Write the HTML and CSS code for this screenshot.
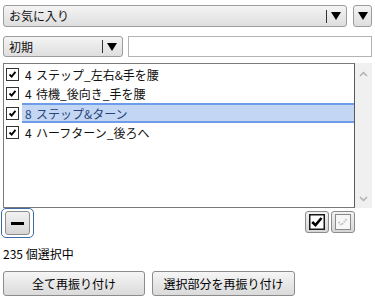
FILE: index.html
```html
<!DOCTYPE html>
<html lang="ja">
<head>
    <meta charset="UTF-8">
    <meta name="viewport" content="width=device-width, initial-scale=1.0">
    <title>お気に入り</title>
    <link rel="stylesheet" href="styles.css">
</head>
<body>
    <div class="panel">
        <div class="row row-top">
            <div class="select select-wide">
                <span class="select-label">お気に入り</span>
                <span class="select-arrow"><i class="sep"></i><i class="tri"></i></span>
            </div>
            <div class="select-btn"><i class="tri"></i></div>
        </div>

        <div class="row row-filter">
            <div class="select select-small">
                <span class="select-label">初期</span>
                <span class="select-arrow"><i class="sep"></i><i class="tri"></i></span>
            </div>
            <input class="search" type="text">
        </div>

        <div class="list-wrap">
            <ul class="list">
                <li class="item">
                    <span class="check"><svg viewBox="0 0 13 13"><path d="M3 6.5 L5.5 9 L10 3.5" /></svg></span>
                    <span class="num">4</span><span class="name">ステップ_左右&amp;手を腰</span>
                </li>
                <li class="item">
                    <span class="check"><svg viewBox="0 0 13 13"><path d="M3 6.5 L5.5 9 L10 3.5" /></svg></span>
                    <span class="num">4</span><span class="name">待機_後向き_手を腰</span>
                </li>
                <li class="item selected">
                    <span class="check"><svg viewBox="0 0 13 13"><path d="M3 6.5 L5.5 9 L10 3.5" /></svg></span>
                    <span class="hl"><span class="num">8</span><span class="name">ステップ&amp;ターン</span></span>
                </li>
                <li class="item">
                    <span class="check"><svg viewBox="0 0 13 13"><path d="M3 6.5 L5.5 9 L10 3.5" /></svg></span>
                    <span class="num">4</span><span class="name">ハーフターン_後ろへ</span>
                </li>
            </ul>
            <div class="scrollbar">
                <svg class="caret" viewBox="0 0 9 6"><path d="M1 5 L4.5 1.5 L8 5" /></svg>
                <svg class="caret" viewBox="0 0 9 6"><path d="M1 1 L4.5 4.5 L8 1" /></svg>
            </div>
        </div>

        <div class="toolbar">
            <div class="focus-ring">
                <button class="btn-minus"><i class="bar"></i></button>
            </div>
            <div class="tool-right">
                <button class="btn-icon">
                    <svg viewBox="0 0 16 16"><rect x="0.75" y="0.75" width="14.5" height="14.5" fill="#fff" stroke="#1a1a1a" stroke-width="1.5" /><path d="M3.2 8 L6.5 11.2 L12.5 4" fill="none" stroke="#000" stroke-width="2.6" /></svg>
                </button>
                <button class="btn-icon">
                    <svg viewBox="0 0 16 16"><rect x="0.5" y="0.5" width="15" height="15" fill="#f7f7f7" stroke="#8a8a8a" /><path d="M3.5 8 L6.5 11 L12 4.5" fill="none" stroke="#c0c0c0" stroke-width="1.8" stroke-dasharray="1.6 1" /></svg>
                </button>
            </div>
        </div>

        <div class="count">235 個選択中</div>

        <div class="actions">
            <button class="btn btn-all">全て再振り付け</button>
            <button class="btn btn-part">選択部分を再振り付け</button>
        </div>
    </div>
</body>
</html>
```

FILE: styles.css
```css
body {
    margin: 0;
    padding: 0;
    background-color: #ffffff;
    color: #000000;
    font-family: "Noto Sans CJK JP", "Noto Sans", sans-serif;
    font-size: 12px;
}
.panel {
    width: 369px;
    padding: 5px 3px 0 3px;
}
.row {
    display: flex;
    align-items: center;
}
.row-top {
    height: 22px;
    gap: 6px;
}
.row-filter {
    height: 21px;
    margin-top: 9px;
    gap: 5px;
}
.select {
    box-sizing: border-box;
    height: 100%;
    display: flex;
    align-items: center;
    justify-content: space-between;
    border: 1px solid #9c9c9c;
    border-radius: 3px;
    background: linear-gradient(#f4f4f4, #dedede);
    padding: 0 5px 0 5px;
}
.select-wide {
    width: 344px;
}
.select-small {
    width: 120px;
}
.select-label {
    line-height: 1;
    color: #111;
}
.select-arrow {
    display: flex;
    align-items: center;
    gap: 4px;
}
.sep {
    display: block;
    width: 1px;
    height: 13px;
    background-color: #333;
}
.tri {
    display: block;
    width: 0;
    height: 0;
    border-left: 5px solid transparent;
    border-right: 5px solid transparent;
    border-top: 8px solid #000;
}
.select-btn {
    box-sizing: border-box;
    width: 19px;
    height: 100%;
    display: flex;
    align-items: center;
    justify-content: center;
    border: 1px solid #9c9c9c;
    border-radius: 3px;
    background: linear-gradient(#f4f4f4, #dedede);
}
.search {
    box-sizing: border-box;
    flex: 1;
    height: 100%;
    margin: 0;
    border: 1px solid #b4b4b4;
    padding: 0 4px;
}
.list-wrap {
    display: flex;
    height: 145px;
    margin-top: 6px;
}
.list {
    box-sizing: border-box;
    flex: 1;
    margin: 0;
    padding: 1px 0 0 0;
    list-style: none;
    border: 1px solid #7a7a7a;
    border-right-color: #5a5a5a;
    color: #111;
}
.item {
    display: flex;
    align-items: center;
    height: 19px;
}
.check {
    box-sizing: border-box;
    width: 13px;
    height: 13px;
    margin: 0 6px 0 2px;
    border: 1px solid #333;
    background-color: #fff;
}
.check svg {
    display: block;
    width: 11px;
    height: 11px;
    fill: none;
    stroke: #000;
    stroke-width: 2.2;
}
.num {
    width: 11px;
}
.item.selected {
    height: 20px;
}
.hl {
    box-sizing: border-box;
    flex: 1;
    height: 100%;
    display: flex;
    align-items: center;
    margin-left: -3px;
    padding-left: 3px;
    background-color: #c3d7f5;
    border-top: 2px solid #6f9ce9;
    border-bottom: 2px solid #6f9ce9;
    color: #2a4577;
}
.scrollbar {
    width: 17px;
    background-color: #f0f0f0;
    display: flex;
    flex-direction: column;
    justify-content: space-between;
    align-items: center;
    padding: 8px 0 6px 0;
    box-sizing: border-box;
}
.caret {
    width: 9px;
    height: 6px;
    fill: none;
    stroke: #b0b0b0;
    stroke-width: 1.5;
}
.toolbar {
    display: flex;
    justify-content: space-between;
    align-items: flex-start;
    height: 30px;
}
.focus-ring {
    box-sizing: border-box;
    width: 33px;
    height: 30px;
    margin-left: -2px;
    padding: 2px 3px;
    border: 1px solid #3d6ba8;
    border-radius: 5px;
}
.btn-minus {
    box-sizing: border-box;
    width: 25px;
    height: 24px;
    display: flex;
    align-items: center;
    justify-content: center;
    padding: 0;
    border: 1px solid #8c8c8c;
    border-radius: 3px;
    background: linear-gradient(#f2f2f2, #d6d6d6);
}
.bar {
    display: block;
    width: 13px;
    height: 3px;
    background-color: #000;
}
.tool-right {
    display: flex;
    gap: 2px;
    margin-top: 3px;
    margin-right: 17px;
}
.btn-icon {
    box-sizing: border-box;
    width: 24px;
    height: 22px;
    display: flex;
    align-items: center;
    justify-content: center;
    padding: 0;
    border: 1px solid #8c8c8c;
    border-radius: 3px;
    background: linear-gradient(#f2f2f2, #d6d6d6);
}
.btn-icon svg {
    display: block;
    width: 16px;
    height: 16px;
}
.count {
    margin-top: 8px;
    line-height: 16px;
}
.actions {
    display: flex;
    gap: 7px;
    margin-top: 9px;
}
.btn {
    box-sizing: border-box;
    height: 25px;
    padding: 0;
    border: 1px solid #8c8c8c;
    border-radius: 3px;
    background: linear-gradient(#f6f6f6, #dadada);
    font-family: "Noto Sans CJK JP", "Noto Sans", sans-serif;
    font-size: 12px;
    color: #000;
}
.btn-all {
    width: 142px;
}
.btn-part {
    width: 143px;
}
```
